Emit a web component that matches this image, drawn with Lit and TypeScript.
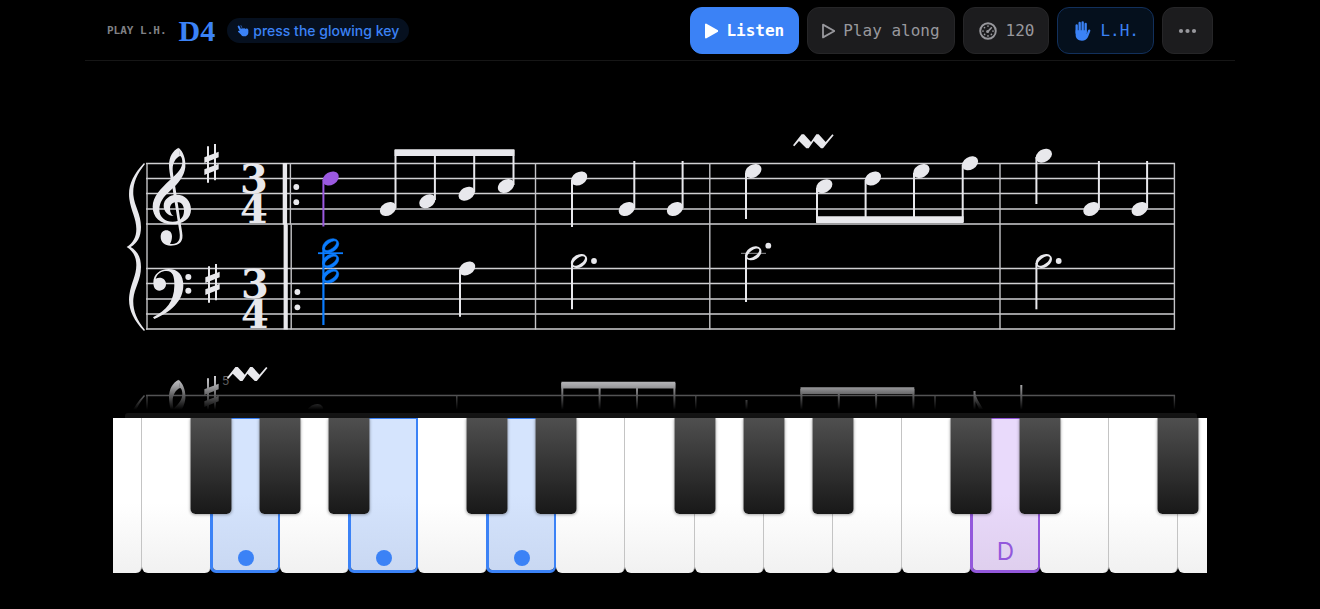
import { LitElement, html, svg, css, nothing } from "lit";
import { customElement, property } from "lit/decorators.js";
import { classMap } from "lit/directives/class-map.js";

type Head = { x: number; y: number; half?: boolean; tone?: string };
type Stem = { x: number; from: number; to: number; tone?: string };

const TREBLE = [163.5, 178.5, 193.5, 209, 224];
const BASS = [268.5, 283.5, 299, 314, 329];

const HEADS: Head[] = [
  { x: 330.7, y: 178.5, tone: "melody" },
  { x: 388, y: 209 },
  { x: 427.3, y: 201.3 },
  { x: 466.7, y: 193.7 },
  { x: 506, y: 186 },
  { x: 467.2, y: 268.4 },
  { x: 330.6, y: 245.7, half: true, tone: "chord" },
  { x: 330.6, y: 261, half: true, tone: "chord" },
  { x: 330.6, y: 276, half: true, tone: "chord" },
  { x: 579.2, y: 178.5 },
  { x: 626.8, y: 209 },
  { x: 675, y: 209 },
  { x: 579, y: 261, half: true },
  { x: 753.3, y: 171 },
  { x: 824.3, y: 186.2 },
  { x: 873, y: 178.5 },
  { x: 921.4, y: 171 },
  { x: 970, y: 163.3 },
  { x: 753.3, y: 253.3, half: true },
  { x: 1043.8, y: 155.7 },
  { x: 1091.4, y: 209 },
  { x: 1139.7, y: 209 },
  { x: 1043.8, y: 261, half: true },
];

const STEMS: Stem[] = [
  { x: 323.4, from: 180, to: 226.5, tone: "melody" },
  { x: 323.4, from: 248, to: 325, tone: "chord" },
  { x: 395.5, from: 150, to: 208 },
  { x: 434.9, from: 150, to: 200 },
  { x: 474.2, from: 150, to: 192 },
  { x: 513.5, from: 150, to: 185 },
  { x: 460, from: 270, to: 316.7 },
  { x: 572, from: 180, to: 227 },
  { x: 634.3, from: 161, to: 208 },
  { x: 682.6, from: 161, to: 208 },
  { x: 572, from: 263, to: 309.3 },
  { x: 746, from: 173, to: 219 },
  { x: 817, from: 188, to: 222 },
  { x: 865.6, from: 180, to: 222 },
  { x: 914, from: 173, to: 222 },
  { x: 962.7, from: 165, to: 222 },
  { x: 746, from: 255, to: 302 },
  { x: 1036.4, from: 157, to: 204 },
  { x: 1098.9, from: 161, to: 208 },
  { x: 1147.1, from: 161, to: 208 },
  { x: 1036.4, from: 263, to: 309.3 },
];

const DOTS = [
  [296.3, 187], [296.3, 202.2], [297.4, 292], [297.4, 307.3],
  [594, 261], [768.3, 245.7], [1058.7, 261],
];

/* Clefs, sharps and the brace are drawn on a grid three times finer than the score. */
const fine = (dy: number, body: unknown) =>
  svg`<g transform="translate(120 ${135 + dy}) scale(.33333)">${body}</g>`;

const trebleClef = svg`
  <path d="M176 38C190 50 198 72 196 96C193 124 174 146 152 166C130 186 118 202 118 224C118 246 136 260 158 260C181 260 192 246 192 227C192 211 184 201 171 201C158 201 150 209 150 221C150 232 154 239 161 243C144 242 131 230 131 212C131 193 149 179 170 179C196 179 213 198 213 224C213 250 190 268 156 268C121 268 98 246 98 215C98 186 123 160 149 136C175 113 187 99 187 82C187 72 185 64 179 62Z"/>
  <path d="M176 38C158 47 147 66 147 90C147 116 157 148 161 182L174 264C177 284 181 298 179 309C176 323 166 328 150 327C153 322 156 314 156 304C156 293 149 286 139 286C129 286 122 293 122 305C122 321 134 332 152 332C170 332 184 326 187 310C189 300 185 284 182 264L170 182C166 150 158 120 158 102C158 84 167 68 180 63Z"/>`;

const bassClef = svg`
  <path d="M100 442C100 418 120 402 146 402C174 402 190 420 190 450C190 500 150 532 103 552L99 547C140 524 162 500 163 452C164 424 158 408 140 408C124 408 112 416 107 431C124 424 138 433 138 448C138 459 129 467 118 467C106 467 100 458 100 442Z"/>
  <circle cx="205" cy="426" r="9"/><circle cx="205" cy="467" r="9"/>`;

const sharp = (dx: number, dy: number) => svg`
  <g transform="translate(${dx} ${dy})">
    <path d="M261 34h6v109h-6zM282 27h6v109h-6zM253 67L296 50V67L253 84zM253 103L296 86V103L253 120z"/>
  </g>`;

const brace = svg`
  <path d="M72 84C38 120 23 154 28 192C33 228 49 250 49 282C49 306 39 324 20 336C39 348 49 366 49 390C49 422 33 444 28 480C23 518 38 552 72 588L75 585C49 553 38 525 40 492C43 458 63 436 63 396C63 366 52 348 32 336C52 324 63 306 63 276C63 236 43 214 40 180C38 147 49 119 75 87Z"/>`;

const mordent = (dx: number, dy: number) => svg`
  <g transform="translate(${dx} ${dy}) scale(.33333)">
    <path d="M0 33L26 0H33L54 23L70 0H77L98 23L118 0L122 3L90 42H84L62 20L47 42H40L18 20L4 36Z"/>
  </g>`;

const lines = (ys: number[]) =>
  ys.map((y) => svg`<line class="staff" x1="146" x2="1175" y1=${y} y2=${y} />`);

const bar = (x: number, y1: number, y2: number) =>
  svg`<line class="bar" x1=${x} x2=${x} y1=${y1} y2=${y2} />`;

const stem = (s: Stem) =>
  svg`<line class="stem ${s.tone ?? ""}" x1=${s.x} x2=${s.x} y1=${s.from} y2=${s.to} />`;

const head = (n: Head) => svg`
  <g class="head ${n.tone ?? ""}" transform="translate(${n.x} ${n.y}) rotate(-31)">
    ${n.half
      ? svg`<path fill-rule="evenodd" d="M-8.7 0A8.7 6.3 0 1 1 8.7 0A8.7 6.3 0 1 1 -8.7 0ZM-7 .6A7 3.1 -5 1 0 7 -.6A7 3.1 -5 1 0 -7 .6Z"/>`
      : svg`<ellipse rx="8.7" ry="6.3"/>`}
  </g>`;

const meter = (x: number, y: number) => svg`
  <text class="meter" y=${y}><tspan x=${x}>3</tspan><tspan x=${x} dy="30">4</tspan></text>`;

@customElement("music-score")
class MusicScore extends LitElement {
  static styles = css`
    :host { display: block; }
    .sheet { display: block; width: 100%; height: auto; fill: #e8e8ec; }
    .staff { stroke: #cfcfd2; stroke-width: 1.6; }
    .bar { stroke: #c4c4c7; stroke-width: 1.4; }
    .stem { stroke: #e8e8ec; stroke-width: 2; }
    .stem.melody { stroke: #9b59e0; }
    .stem.chord { stroke: #0a7cff; stroke-width: 2.2; }
    .head.melody { fill: #9b59e0; }
    .head.chord { fill: #0a7cff; stroke: #0a7cff; stroke-width: .5; }
    .ledger { stroke: #77777a; stroke-width: 1.2; }
    .ledger.chord { stroke: #0a7cff; stroke-width: 1.8; }
    .meter { font: bold 40px "DejaVu Serif", serif; text-anchor: middle; }
    .measure { font: 12px Inter, sans-serif; fill: #77777a; }
  `;

  render() {
    return html`
      <svg class="sheet" viewBox="85 61 1150 352" role="img" aria-label="Score in G major, three-four time">
        <defs>
          <linearGradient id="fade" x1="0" y1="0" x2="0" y2="1">
            <stop offset="0" stop-color="#000" stop-opacity="0" />
            <stop offset=".35" stop-color="#000" stop-opacity=".3" />
            <stop offset=".6" stop-color="#000" stop-opacity=".62" />
            <stop offset=".92" stop-color="#000" stop-opacity="1" />
            <stop offset="1" stop-color="#000" stop-opacity="1" />
          </linearGradient>
        </defs>

        ${lines(TREBLE)} ${lines(BASS)}
        ${[147, 535.5, 709.8, 1000, 1174.4].map((x) => bar(x, 163, 329.5))}
        <path d="M282.7 163h4.4v61.5h-4.4zM283.6 224.5h4.2v105h-4.2z" />
        ${bar(290.4, 163, 224.5)} ${bar(291.2, 224.5, 329.5)}
        ${fine(0, [brace, trebleClef, bassClef, sharp(0, 0), sharp(3, 360)])}
        ${meter(254, 193)} ${meter(255, 298)}

        <line class="ledger chord" x1="318" x2="343" y1="253.2" y2="253.2" />
        <line class="ledger" x1="741" x2="766" y1="253.4" y2="253.4" />
        ${STEMS.map(stem)} ${HEADS.map(head)}
        <path d="M394.6 149.3h119.8v6.7H394.6zM816.1 216.2h147.5v6.9H816.1z" />
        ${DOTS.map(([x, y]) => svg`<circle cx=${x} cy=${y} r="2.9" />`)}
        ${mordent(793, 134.3)}

        ${lines([395.5])}
        ${[147, 456.8, 695.8, 935, 1174.4].map((x) => bar(x, 395, 413))}
        ${fine(232, [brace, trebleClef, sharp(0, 0)])}
        <text class="measure" x="222" y="385">5</text>
        ${[562.3, 599.6, 637, 674.4].map((x) => stem({ x, from: 383, to: 413 }))}
        ${[801.4, 838.8, 876.1, 913.4].map((x) => stem({ x, from: 389, to: 413 }))}
        ${stem({ x: 746.5, from: 400, to: 413 })} ${stem({ x: 974.5, from: 391, to: 413 })}
        ${stem({ x: 1021.3, from: 385, to: 413 })} ${head({ x: 315, y: 411 })}
        <path d="M561.4 381.7h113.9v6.9H561.4zM800.5 387.2h113.8v6.9H800.5zM974 391Q977 400 983 409L979 409Q976 402 974 400Z" />
        <rect x="85" y="371" width="1150" height="42" fill="url(#fade)" />
        ${mordent(226.8, 367)}
      </svg>
    `;
  }
}

type Key = { name: string; black?: boolean; mark?: "dot" | "label" };

const KEYS: Key[] = [
  { name: "E" }, { name: "F" }, { name: "G", black: true, mark: "dot" },
  { name: "A", black: true }, { name: "B", black: true, mark: "dot" }, { name: "C" },
  { name: "D", black: true, mark: "dot" }, { name: "E", black: true }, { name: "F" },
  { name: "G", black: true }, { name: "A", black: true }, { name: "B", black: true },
  { name: "C" }, { name: "D", black: true, mark: "label" }, { name: "E", black: true },
  { name: "F" }, { name: "G", black: true },
];

@customElement("piano-keys")
class PianoKeys extends LitElement {
  @property({ attribute: false }) keys: Key[] = KEYS;

  static styles = css`
    :host { display: block; }
    .rail { height: 5px; margin: 0 10px 0 12px; background: #131313; border-radius: 3px 3px 0 0; }
    .keys { display: grid; grid-template-columns: 29fr repeat(15, 69fr) 29fr; height: 155px; }
    .cell { position: relative; display: grid; min-width: 0; }
    button { margin: 0; padding: 0; border: 0; cursor: pointer; }
    .white {
      display: flex;
      align-items: flex-end;
      justify-content: center;
      min-width: 0;
      background: linear-gradient(#fff 55%, #f1f1f1);
      border-right: 1px solid #c4c4c4;
      border-radius: 0 0 6px 6px;
    }
    .cell:first-child .white { border-bottom-left-radius: 0; }
    .cell:last-child .white { border-bottom-right-radius: 0; border-right: 0; }
    .white.dot, .white.label {
      margin-left: -1px;
      border-style: solid;
      border-width: 1px 2px 3px 3px;
    }
    .white.dot { border-color: #3b82f6; background: linear-gradient(#d5e4fd 50%, #c9d8f2) padding-box; }
    .white.label {
      border-color: #9358dc;
      background: linear-gradient(#e9dafb 50%, #dfcfee) padding-box;
      color: #9358dc;
      font: 24px/29px Inter, sans-serif;
      padding-bottom: 4px;
    }
    .spot { width: 16px; height: 16px; margin-bottom: 4px; border-radius: 50%; background: #3b82f6; }
    .black {
      position: absolute;
      z-index: 1;
      top: 0;
      left: 0;
      width: 41px;
      height: 96px;
      transform: translateX(-50%);
      border-radius: 0 0 5px 5px;
      background: linear-gradient(#4f4f4f, #181818);
      box-shadow: 0 1px 3px #0005;
    }
  `;

  render() {
    return html`
      <div class="rail"></div>
      <div class="keys">
        ${this.keys.map(
          (k) => html`
            <div class="cell">
              <button
                class=${classMap({ white: true, dot: k.mark === "dot", label: k.mark === "label" })}
                aria-label=${k.name}
              >${k.mark === "dot" ? html`<span class="spot"></span>` : k.mark === "label" ? k.name : nothing}</button>
              ${k.black ? html`<button class="black" aria-label="${k.name} flat"></button>` : nothing}
            </div>
          `
        )}
      </div>
    `;
  }
}

@customElement("app-root")
class AppRoot extends LitElement {
  static styles = css`
    :host { display: block; min-height: 100vh; background: #000; }
    .page { max-width: 1150px; margin: 0 auto; }
    .top {
      display: flex;
      align-items: center;
      justify-content: space-between;
      padding: 7px 22px 6px;
      border-bottom: 1px solid #161616;
    }
    .prompt, .tools { display: flex; align-items: center; }
    .prompt { gap: 12px; }
    .tools { gap: 8px; }
    .hand { font: bold 11px/16px "DejaVu Sans Mono", monospace; color: #808085; }
    .note { font: bold 30px/36px "Liberation Serif", serif; color: #3b82f6; }
    .hint {
      display: flex;
      align-items: center;
      gap: 4px;
      height: 25px;
      padding: 0 10px;
      border-radius: 13px;
      background: #06101f;
      color: #3b82f6;
      font: 500 14px/16px Inter, sans-serif;
    }
    svg { display: block; flex: none; }
    button {
      display: flex;
      align-items: center;
      gap: 8px;
      height: 47px;
      padding: 0 14px;
      border: 1px solid #262628;
      border-radius: 12px;
      background: #1c1c1e;
      color: #98989d;
      font: 16px/20px "DejaVu Sans Mono", monospace;
      cursor: pointer;
    }
    .primary { background: #3b82f6; border-color: #3b82f6; color: #fff; font-weight: bold; }
    .active { background: #05101d; border-color: #12305c; color: #3b82f6; }
    .keyboard { margin: 0 28px; }
  `;

  render() {
    return html`
      <main class="page">
        <header class="top">
          <div class="prompt">
            <span class="hand">PLAY L.H.</span>
            <span class="note">D4</span>
            <span class="hint">
              <svg width="12" height="14" viewBox="0 0 36 42" fill="currentColor" stroke="currentColor" stroke-linecap="round">
                <path d="M5 8L13 24" stroke-width="6" />
                <path d="M11 22C8 19 3 20 3 23L11 31C14 36 17 37 21 37C29 37 34 32 34 26V18C32 13 28 13 26 15C24 12 20 12 18 14C16 12 13 13 12 15Z" stroke="none" />
                <path d="M12 5L14 10" stroke-width="2" />
              </svg>
              press the glowing key
            </span>
          </div>
          <div class="tools">
            <button class="primary">
              <svg width="13" height="16" viewBox="0 0 13 16" fill="currentColor" stroke="currentColor" stroke-width="2" stroke-linejoin="round">
                <path d="M1 1.5V14.5L12.5 8Z" />
              </svg>
              Listen
            </button>
            <button>
              <svg width="13" height="16" viewBox="0 0 13 16" fill="none" stroke="currentColor" stroke-width="1.8" stroke-linejoin="round">
                <path d="M1 1.6V14.4L12.4 8Z" />
              </svg>
              Play along
            </button>
            <button>
              <svg width="20" height="20" viewBox="0 0 20 20" fill="none" stroke="currentColor" stroke-linecap="round">
                <circle cx="10" cy="10" r="7.8" stroke-width="1.9" />
                <circle cx="9.6" cy="10.6" r="1.5" fill="currentColor" stroke="none" />
                <path d="M10 10.4L13.4 6.8" stroke-width="1.6" />
                <path d="M10 5v.1M6.5 6.5v.1M5 10v.1M15 10v.1M6.6 13.4v.1M13.4 13.4v.1M10 14.8v.1" stroke-width="1.7" />
              </svg>
              120
            </button>
            <button class="active">
              <svg width="20" height="20" viewBox="0 0 60 60" fill="none" stroke="currentColor" stroke-linecap="round">
                <path d="M14 13V36M23 6V32M32 4V32M41 9V34" stroke-width="7" />
                <path d="M11 28H44V40L48 28C50 24 56 26 55 30L48 48C45 55 38 59 30 59C18 59 11 52 11 42Z" fill="currentColor" stroke="none" />
              </svg>
              L.H.
            </button>
            <button aria-label="More">
              <svg width="21" height="20" viewBox="0 0 21 20" fill="currentColor">
                <circle cx="4" cy="10" r="2.1" /><circle cx="10.5" cy="10" r="2.1" /><circle cx="17" cy="10" r="2.1" />
              </svg>
            </button>
          </div>
        </header>
        <music-score></music-score>
        <piano-keys class="keyboard"></piano-keys>
      </main>
    `;
  }
}
